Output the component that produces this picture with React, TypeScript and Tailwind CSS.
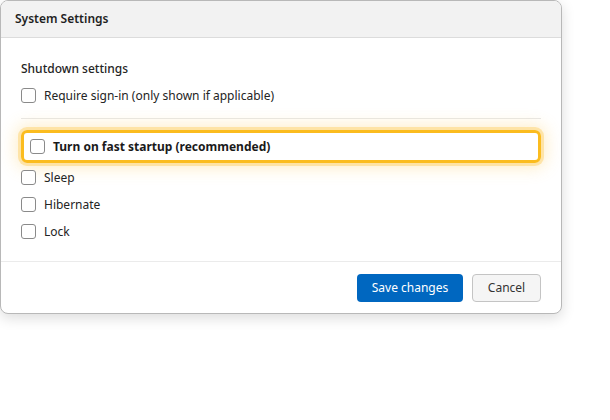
import { useState } from "react";

const font = { fontFamily: '"Noto Sans", "Open Sans", sans-serif' };

interface CheckRowProps {
  label: string;
  checked: boolean;
  onToggle: () => void;
}

const Box = ({ checked }: { checked: boolean }) => (
  <span
    className={`flex h-[15px] w-[15px] shrink-0 items-center justify-center rounded-[3px] border ${
      checked ? "border-[#0067c0] bg-[#0067c0]" : "border-[#8a8a8a] bg-white"
    }`}
  >
    {checked && (
      <svg viewBox="0 0 12 12" className="h-[10px] w-[10px]" fill="none" stroke="white" strokeWidth="1.6">
        <path d="M2.5 6.2 5 8.6 9.6 3.6" />
      </svg>
    )}
  </span>
);

const CheckRow = ({ label, checked, onToggle }: CheckRowProps) => (
  <label className="flex h-[27px] cursor-pointer items-center gap-[8px] text-[12px] text-[#242424]" onClick={onToggle}>
    <Box checked={checked} />
    <span>{label}</span>
  </label>
);

export default function App() {
  const [opts, setOpts] = useState({
    signin: false,
    fast: false,
    sleep: false,
    hibernate: false,
    lock: false,
  });
  const toggle = (k: keyof typeof opts) => setOpts((o) => ({ ...o, [k]: !o[k] }));

  return (
    <div className="h-[420px] w-[610px] bg-white" style={font}>
      <div className="w-[562px] overflow-hidden rounded-lg border border-[#b8b8b8] bg-white shadow-[0_4px_14px_rgba(0,0,0,0.14)]">
        <div className="flex h-[37px] items-center border-b border-[#dcdcdc] bg-[#f2f2f2] px-[14px] text-[12px] font-semibold text-[#1f1f1f]">
          System Settings
        </div>

        <div className="px-[20px] pt-[22px] pb-[16px]">
          <div className="text-[12px] font-medium text-[#242424]">Shutdown settings</div>
          <div className="mt-[4px]">
            <CheckRow label="Require sign-in (only shown if applicable)" checked={opts.signin} onToggle={() => toggle("signin")} />
          </div>
          <div className="mt-[9px] h-px bg-[#e8e8e8]" />

          <div
            className="mt-[11px] flex h-[33px] cursor-pointer items-center gap-[8px] rounded-[6px] border-[3px] border-[#fbbc1f] px-[6px] text-[12px] font-bold text-[#1a1a1a] shadow-[0_0_0_3px_rgba(253,214,120,0.55),0_0_16px_5px_rgba(253,200,80,0.3)]"
            onClick={() => toggle("fast")}
          >
            <Box checked={opts.fast} />
            <span>Turn on fast startup (recommended)</span>
          </div>

          <div className="mt-[1px] flex flex-col">
            <CheckRow label="Sleep" checked={opts.sleep} onToggle={() => toggle("sleep")} />
            <CheckRow label="Hibernate" checked={opts.hibernate} onToggle={() => toggle("hibernate")} />
            <CheckRow label="Lock" checked={opts.lock} onToggle={() => toggle("lock")} />
          </div>
        </div>

        <div className="flex items-center justify-end gap-[9px] border-t border-[#ebebeb] px-[20px] pt-[12px] pb-[11px]">
          <button className="h-[28px] w-[106px] rounded-[4px] bg-[#0067c0] text-[12px] text-white">Save changes</button>
          <button className="h-[28px] w-[69px] rounded-[4px] border border-[#c4c4c4] bg-[#f5f5f5] text-[12px] text-[#333]">
            Cancel
          </button>
        </div>
      </div>
    </div>
  );
}
